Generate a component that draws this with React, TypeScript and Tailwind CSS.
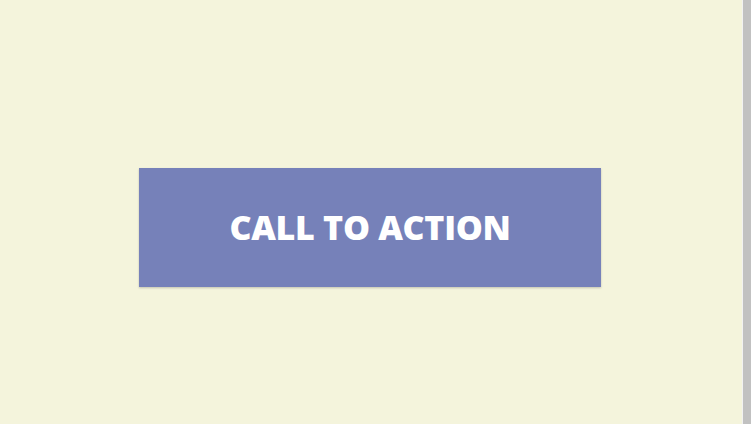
import React from 'react';

const App = () => {
  return (
    <div className="flex h-[424px] w-full overflow-hidden bg-[#f4f4dc]">
      <main className="flex flex-1 justify-center pr-[2px] pt-[168px]">
        <button
          className="flex h-[119px] w-[462px] items-center justify-center bg-[#7681b9] shadow-[0_1px_2px_rgba(0,0,0,0.2)]"
        >
          <span
            className="text-[34px] font-extrabold tracking-[-0.3px] text-white"
            style={{ fontFamily: '"Open Sans", "Noto Sans", sans-serif' }}
          >
            CALL TO ACTION
          </span>
        </button>
      </main>
      {/* scrollbar */}
      <div className="flex w-[9px] shrink-0">
        <div className="w-[1px] bg-[#f1f1f1]" />
        <div className="flex-1 bg-[#c1c1c1]" />
      </div>
    </div>
  );
};

export default App;
